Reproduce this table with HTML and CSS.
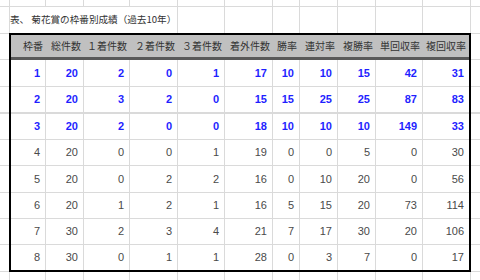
FILE: index.html
```html
<!DOCTYPE html>
<html lang="ja">
<head>
<meta charset="utf-8">
<title>菊花賞の枠番別成績</title>
<link rel="stylesheet" href="styles.css">
</head>
<body>
<div class="sheet">
  <div class="row top">
    <div class="cell w0"></div><div class="cell w1"></div><div class="cell w2"></div><div class="cell w3"></div><div class="cell w4"></div><div class="cell w5"></div><div class="cell w6"></div><div class="cell w7"></div><div class="cell w8"></div><div class="cell w9"></div><div class="cell w10"></div><div class="cell w11"></div><div class="cell wl"></div>
  </div>
  <div class="row title">
    <div class="cell w0"></div>
    <div class="cell wt"><span class="title-text">表、 菊花賞の枠番別成績（過去10年）</span></div>
    <div class="cell w5"></div><div class="cell w6"></div><div class="cell w7"></div><div class="cell w8"></div><div class="cell w9"></div><div class="cell w10"></div><div class="cell w11"></div><div class="cell wl"></div>
  </div>
  <div class="mid">
    <div class="gutter">
      <div class="g first"></div><div class="g h27"></div><div class="g h27 thick"></div><div class="g h26"></div><div class="g h26"></div><div class="g h27"></div><div class="g h26"></div><div class="g h26"></div><div class="g last"></div>
    </div>
    <div class="table">
      <div class="th">枠番</div><div class="th">総件数</div><div class="th">１着件数</div><div class="th">２着件数</div><div class="th">３着件数</div><div class="th">着外件数</div><div class="th">勝率</div><div class="th">連対率</div><div class="th">複勝率</div><div class="th">単回収率</div><div class="th">複回収率</div>

      <div class="td hi">1</div><div class="td hi">20</div><div class="td hi">2</div><div class="td hi">0</div><div class="td hi">1</div><div class="td hi">17</div><div class="td hi">10</div><div class="td hi">10</div><div class="td hi">15</div><div class="td hi">42</div><div class="td hi">31</div>
      <div class="td hi thick">2</div><div class="td hi thick">20</div><div class="td hi thick">3</div><div class="td hi thick">2</div><div class="td hi thick">0</div><div class="td hi thick">15</div><div class="td hi thick">15</div><div class="td hi thick">25</div><div class="td hi thick">25</div><div class="td hi thick">87</div><div class="td hi thick">83</div>
      <div class="td hi">3</div><div class="td hi">20</div><div class="td hi">2</div><div class="td hi">0</div><div class="td hi">0</div><div class="td hi">18</div><div class="td hi">10</div><div class="td hi">10</div><div class="td hi">10</div><div class="td hi">149</div><div class="td hi">33</div>
      <div class="td">4</div><div class="td">20</div><div class="td">0</div><div class="td">0</div><div class="td">1</div><div class="td">19</div><div class="td">0</div><div class="td">0</div><div class="td">5</div><div class="td">0</div><div class="td">30</div>
      <div class="td">5</div><div class="td">20</div><div class="td">0</div><div class="td">2</div><div class="td">2</div><div class="td">16</div><div class="td">0</div><div class="td">10</div><div class="td">20</div><div class="td">0</div><div class="td">56</div>
      <div class="td">6</div><div class="td">20</div><div class="td">1</div><div class="td">2</div><div class="td">1</div><div class="td">16</div><div class="td">5</div><div class="td">15</div><div class="td">20</div><div class="td">73</div><div class="td">114</div>
      <div class="td">7</div><div class="td">30</div><div class="td">2</div><div class="td">3</div><div class="td">4</div><div class="td">21</div><div class="td">7</div><div class="td">17</div><div class="td">30</div><div class="td">20</div><div class="td">106</div>
      <div class="td lastrow">8</div><div class="td lastrow">30</div><div class="td lastrow">0</div><div class="td lastrow">1</div><div class="td lastrow">1</div><div class="td lastrow">28</div><div class="td lastrow">0</div><div class="td lastrow">3</div><div class="td lastrow">7</div><div class="td lastrow">0</div><div class="td lastrow">17</div>
    </div>
    <div class="gutter">
      <div class="g first"></div><div class="g h27"></div><div class="g h27 thick"></div><div class="g h26"></div><div class="g h26"></div><div class="g h27"></div><div class="g h26"></div><div class="g h26"></div><div class="g last"></div>
    </div>
  </div>
  <div class="row bottom">
    <div class="cell w0"></div><div class="cell w1"></div><div class="cell w2"></div><div class="cell w3"></div><div class="cell w4"></div><div class="cell w5"></div><div class="cell w6"></div><div class="cell w7"></div><div class="cell w8"></div><div class="cell w9"></div><div class="cell w10"></div><div class="cell w11"></div><div class="cell wl"></div>
  </div>
</div>
</body>
</html>
```

FILE: styles.css
```css
* {
  box-sizing: border-box;
  margin: 0;
  padding: 0;
}

html, body {
  background: #ffffff;
}

body {
  margin: 0;
  width: 480px;
  height: 280px;
  overflow: hidden;
  font-family: "Noto Sans CJK JP", "Noto Sans", sans-serif;
  color: #333333;
}

.sheet {
  display: flex;
  flex-direction: column;
  width: 480px;
}

.row {
  display: flex;
}

.cell {
  flex: none;
  height: 100%;
  border-right: 1px solid #dadada;
}

.top {
  height: 7px;
}

.top .cell {
  border-bottom: 1px solid #dadada;
}

.title {
  height: 26px;
}

.bottom {
  height: 8px;
}

.w0 { width: 10px; }
.w1 { width: 36px; }
.w2 { width: 38px; }
.w3 { width: 46px; }
.w4 { width: 48px; }
.w5 { width: 47px; }
.w6 { width: 48px; }
.w7 { width: 27px; }
.w8 { width: 38px; }
.w9 { width: 38px; }
.w10 { width: 47px; }
.w11 { width: 48px; }
.wl { width: 9px; border-right: none; }
.wt { width: 168px; }

.wt {
  display: flex;
  align-items: center;
  white-space: nowrap;
}

.title-text {
  font-size: 9.6px;
  line-height: 1;
  color: #333333;
}

.mid {
  display: flex;
  height: 239px;
}

.gutter {
  flex: none;
  width: 9px;
  display: flex;
  flex-direction: column;
}

.g {
  flex: none;
  border-bottom: 1px solid #dadada;
}

.g.first {
  height: 27px;
  border-top: 1px solid #dadada;
}

.g.h27 { height: 27px; }
.g.h26 { height: 26px; }
.g.last { height: 27px; }
.g.thick { border-bottom-width: 2px; }

.table {
  flex: none;
  width: 462px;
  height: 239px;
  border: 2px solid #000000;
  display: grid;
  grid-template-columns: 35px 38px 46px 48px 47px 48px 27px 38px 38px 47px 46px;
  grid-template-rows: 25px 27px 27px 26px 26px 27px 26px 26px 25px;
}

.th {
  background: #c0c0c0;
  border-bottom: 3px solid #595959;
  display: flex;
  align-items: center;
  justify-content: flex-end;
  padding-right: 3px;
  font-size: 10px;
  line-height: 1;
  color: #333333;
  white-space: nowrap;
}

.td {
  display: flex;
  align-items: center;
  justify-content: flex-end;
  padding-right: 5px;
  border-right: 1px solid #dadada;
  border-bottom: 1px solid #dadada;
  font-family: "Liberation Sans", Arial, sans-serif;
  font-size: 11px;
  line-height: 1;
  color: #4a4a4a;
}

.td:nth-child(11n) {
  border-right: none;
}

.td.thick {
  border-bottom-width: 2px;
}

.td.lastrow {
  border-bottom: none;
}

.td.hi {
  color: #1f1fff;
  font-weight: bold;
}
```
